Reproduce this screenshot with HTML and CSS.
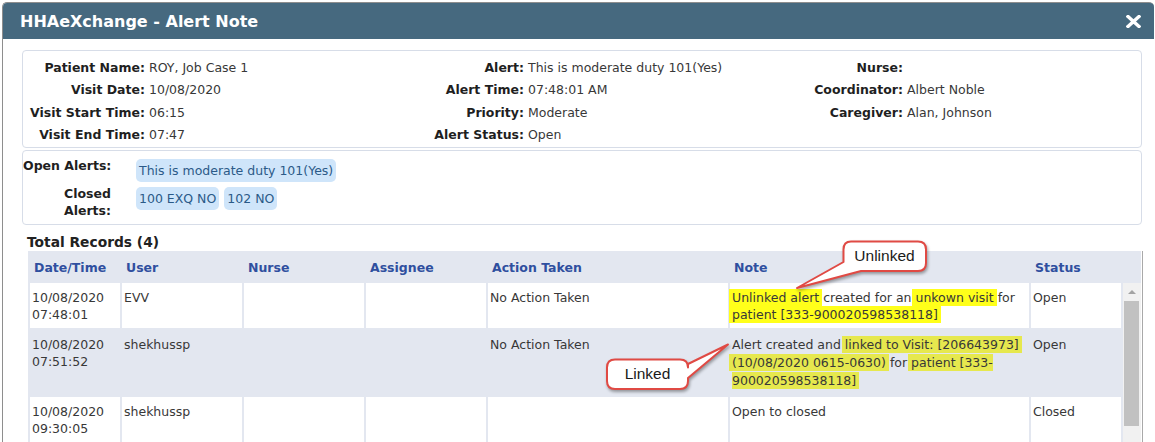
FILE: index.html
```html
<!DOCTYPE html>
<html>
<head>
<meta charset="utf-8">
<title>HHAeXchange - Alert Note</title>
<link rel="stylesheet" href="styles.css">
</head>
<body>
<div class="dialog">
  <div class="titlebar">
    <span class="title">HHAeXchange - Alert Note</span>
    <svg class="close" width="15" height="13" viewBox="0 0 15 13"><path d="M2 1.5 L13 11.5 M13 1.5 L2 11.5" stroke="#fff" stroke-width="3.4" stroke-linecap="square"/></svg>
  </div>
  <div class="content">
    <div class="panel info">
      <div class="col">
        <span class="lbl">Patient Name:</span><span class="val">ROY, Job Case 1</span>
        <span class="lbl">Visit Date:</span><span class="val">10/08/2020</span>
        <span class="lbl">Visit Start Time:</span><span class="val">06:15</span>
        <span class="lbl">Visit End Time:</span><span class="val">07:47</span>
      </div>
      <div class="col">
        <span class="lbl">Alert:</span><span class="val">This is moderate duty 101(Yes)</span>
        <span class="lbl">Alert Time:</span><span class="val">07:48:01 AM</span>
        <span class="lbl">Priority:</span><span class="val">Moderate</span>
        <span class="lbl">Alert Status:</span><span class="val">Open</span>
      </div>
      <div class="col">
        <span class="lbl">Nurse:</span><span class="val"></span>
        <span class="lbl">Coordinator:</span><span class="val">Albert Noble</span>
        <span class="lbl">Caregiver:</span><span class="val">Alan, Johnson</span>
      </div>
    </div>
    <div class="panel alerts">
      <div class="lbl nowrap">Open Alerts:</div>
      <div class="chips"><span class="chip">This is moderate duty 101(Yes)</span></div>
      <div class="lbl">Closed Alerts:</div>
      <div class="chips"><span class="chip">100 EXQ NO</span><span class="chip">102 NO</span></div>
    </div>
    <div class="records-title">Total Records (4)</div>
    <div class="table-wrap">
      <table class="records">
        <colgroup>
          <col class="c-date"><col class="c-user"><col class="c-nurse"><col class="c-assignee"><col class="c-action"><col class="c-note"><col class="c-status">
        </colgroup>
        <thead>
          <tr><th>Date/Time</th><th>User</th><th>Nurse</th><th>Assignee</th><th>Action Taken</th><th>Note</th><th>Status</th></tr>
        </thead>
        <tbody>
          <tr>
            <td>10/08/2020<br>07:48:01</td><td>EVV</td><td></td><td></td><td>No Action Taken</td>
            <td><mark class="hl">Unlinked alert</mark> created for an <mark class="hl">unkown visit</mark> for <mark class="hl">patient [333-900020598538118]</mark></td>
            <td>Open</td>
          </tr>
          <tr class="alt">
            <td>10/08/2020<br>07:51:52</td><td>shekhussp</td><td></td><td></td><td>No Action Taken</td>
            <td class="note-linked">Alert created and <mark class="hl2">linked to Visit: [206643973]</mark> <mark class="hl2">(10/08/2020 0615-0630)</mark> for <mark class="hl2">patient [333-<wbr>900020598538118]</mark></td>
            <td>Open</td>
          </tr>
          <tr>
            <td>10/08/2020<br>09:30:05</td><td>shekhussp</td><td></td><td></td><td></td>
            <td>Open to closed</td>
            <td>Closed</td>
          </tr>
        </tbody>
      </table>
      <div class="scrollbar"><span class="arrow"></span><span class="thumb"></span></div>
    </div>
  </div>
</div>

<svg class="annot" width="1155" height="442" viewBox="0 0 1155 442">
  <path d="M851 241.5 H918 Q926 241.5 926 249.5 V263 Q926 271 918 271 H861 L797 288 L843.5 262 V249.5 Q843.5 241.5 851 241.5 Z" fill="#fff" stroke="#e04a44" stroke-width="2" stroke-linejoin="round"/>
  <path d="M615 359.5 H680 Q688 359.5 688 367.5 V364 L728 344.5 L688 378 V381 Q688 389 680 389 H615 Q607 389 607 381 V367.5 Q607 359.5 615 359.5 Z" fill="#fff" stroke="#e04a44" stroke-width="2" stroke-linejoin="round"/>
</svg>
<div class="callout-label unlinked">Unlinked</div>
<div class="callout-label linked">Linked</div>
</body>
</html>
```

FILE: styles.css
```css
html, body {
  margin: 0;
  padding: 0;
}

body {
  width: 1155px;
  height: 442px;
  overflow: hidden;
  position: relative;
  background: #fff;
  font-family: "DejaVu Sans", Verdana, sans-serif;
  font-size: 12.5px;
  color: #383838;
}

.dialog {
  margin: 2px 0 0 2px;
  width: 1152px;
  height: 460px;
  border: 1px solid #8e8e8e;
  border-right: none;
  border-bottom: none;
  border-radius: 5px 5px 0 0;
  box-sizing: border-box;
}

.titlebar {
  height: 36px;
  background: #46697f;
  border-radius: 4px 4px 0 0;
  display: flex;
  align-items: center;
  justify-content: space-between;
  padding: 0 13px 0 17px;
  color: #fff;
}

.title {
  font-weight: bold;
  font-size: 16px;
}

.close {
  display: block;
}

.content {
  padding: 11px 12px 0 19px;
}

.panel {
  border: 1px solid #d7dde8;
  border-radius: 4px;
  box-sizing: border-box;
}

.info {
  height: 98px;
  padding-top: 5px;
  display: grid;
  grid-template-columns: repeat(3, 379px);
}

.col {
  display: grid;
  grid-template-columns: 122px 1fr;
  column-gap: 4px;
  grid-auto-rows: 22.5px;
  align-items: center;
  align-content: start;
}

.lbl {
  text-align: right;
  font-weight: bold;
  color: #1f1f1f;
}

.nowrap {
  white-space: nowrap;
}

.val {
  white-space: nowrap;
}

.alerts {
  margin-top: 2px;
  height: 75px;
  padding-top: 6px;
  display: grid;
  grid-template-columns: 88px auto;
  column-gap: 25px;
  row-gap: 3px;
  align-content: start;
  align-items: start;
  line-height: 17px;
}

.chips {
  display: flex;
  gap: 5px;
  margin-top: 2px;
}

.chip {
  background: #cfe5fa;
  color: #2b5a88;
  border-radius: 5px;
  padding: 0 3px;
  height: 23px;
  line-height: 23px;
}

.records-title {
  margin: 8px 0 0 5px;
  font-size: 13.8px;
  font-weight: bold;
  line-height: 18px;
  color: #222;
}

.table-wrap {
  display: flex;
  margin-left: 6px;
  width: 1115px;
  box-sizing: border-box;
  background: #e3e7f0;
  border-right: 1px solid #a9a9a9;
  box-shadow: inset -1px 0 0 #fff;
}

.records {
  border-collapse: separate;
  border-spacing: 2px;
  table-layout: fixed;
  width: 1095px;
  flex: none;
}

.c-date { width: 90px; }
.c-user { width: 120px; }
.c-nurse { width: 120px; }
.c-assignee { width: 120px; }
.c-action { width: 240px; }
.c-note { width: 299px; }
.c-status { width: 90px; }

.records th {
  height: 28px;
  padding: 0 4px;
  text-align: left;
  font-weight: bold;
  color: #2f4f9f;
  vertical-align: middle;
}

.records td {
  padding: 6px 2px 5px;
  line-height: 17px;
  vertical-align: top;
  background: #fff;
}

.records tr.alt td {
  background: transparent;
}

.records td.note-linked {
  line-height: 18px;
}

.hl, .hl2 {
  color: inherit;
  padding: 1px 3px;
  margin: 0 -3px;
}

.hl {
  background: #ffff1a;
}

.hl2 {
  background: #e6e84e;
}

.scrollbar {
  width: 18px;
  margin-top: 32px;
  background: #f1f1f1;
  display: flex;
  flex-direction: column;
  align-items: center;
}

.arrow {
  margin-top: 7px;
  width: 0;
  height: 0;
  border-left: 4px solid transparent;
  border-right: 4px solid transparent;
  border-bottom: 4px solid #a3a3a3;
}

.thumb {
  margin-top: 7px;
  align-self: flex-start;
  margin-left: 1px;
  width: 15px;
  height: 125px;
  background: #c1c1c1;
}

.annot {
  position: absolute;
  left: 0;
  top: 0;
  pointer-events: none;
  filter: drop-shadow(1.5px 2px 1.5px rgba(0, 0, 0, 0.35));
}

.callout-label {
  position: absolute;
  height: 30px;
  line-height: 30px;
  text-align: center;
  font-family: "Liberation Sans", Arial, sans-serif;
  font-size: 15.5px;
  color: #1a1a1a;
}

.callout-label.unlinked {
  left: 843px;
  top: 241px;
  width: 83px;
}

.callout-label.linked {
  left: 607px;
  top: 359px;
  width: 81px;
}
```
